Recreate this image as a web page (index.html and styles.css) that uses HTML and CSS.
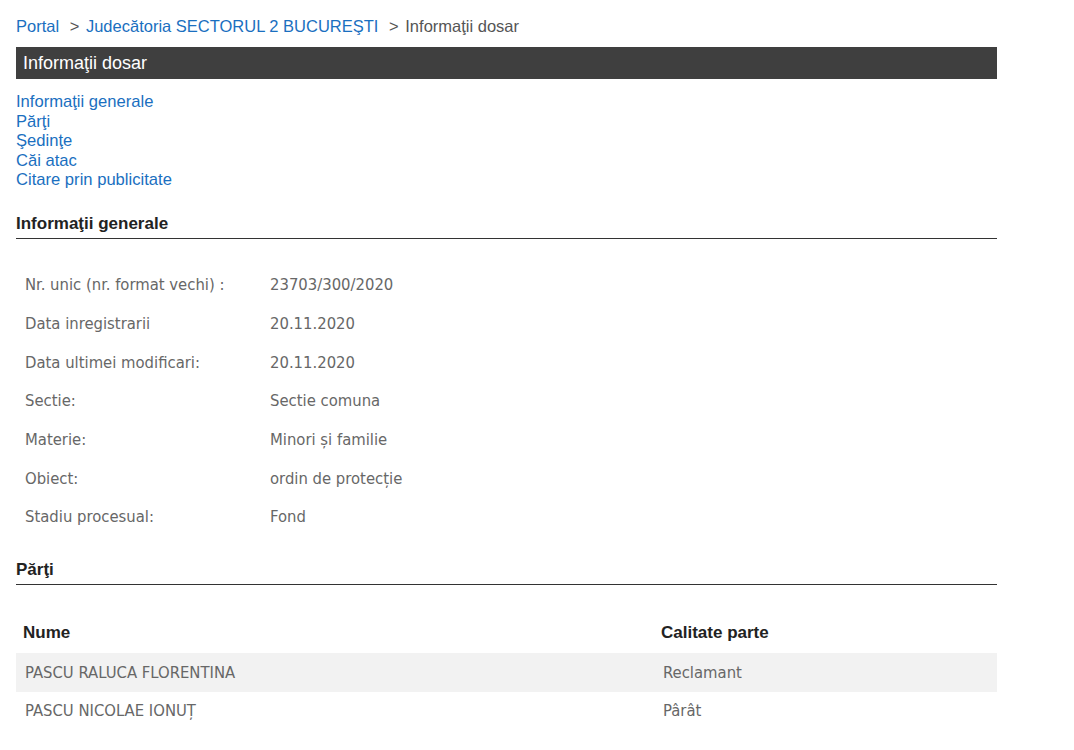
FILE: index.html
```html
<!DOCTYPE html>
<html lang="ro">
<head>
    <meta charset="UTF-8">
    <title>Informaţii dosar</title>
    <link rel="stylesheet" href="styles.css">
</head>
<body>
    <div class="page">
        <div class="breadcrumb">
            <a href="#">Portal</a>
            <span class="sep">&gt;</span>
            <a href="#">Judecătoria SECTORUL 2 BUCUREŞTI</a>
            <span class="sep">&gt;</span>
            <span class="current">Informaţii dosar</span>
        </div>

        <div class="title-bar">Informaţii dosar</div>

        <!-- cuprins -->
        <ul class="toc">
            <li><a href="#generale">Informaţii generale</a></li>
            <li><a href="#parti">Părţi</a></li>
            <li><a href="#sedinte">Şedinţe</a></li>
            <li><a href="#cai">Căi atac</a></li>
            <li><a href="#citare">Citare prin publicitate</a></li>
        </ul>

        <h2 class="section-title" id="generale">Informaţii generale</h2>
        <table class="info">
            <tr><td class="label">Nr. unic (nr. format vechi) :</td><td>23703/300/2020</td></tr>
            <tr><td class="label">Data inregistrarii</td><td>20.11.2020</td></tr>
            <tr><td class="label">Data ultimei modificari:</td><td>20.11.2020</td></tr>
            <tr><td class="label">Sectie:</td><td>Sectie comuna</td></tr>
            <tr><td class="label">Materie:</td><td>Minori și familie</td></tr>
            <tr><td class="label">Obiect:</td><td>ordin de protecție</td></tr>
            <tr><td class="label">Stadiu procesual:</td><td>Fond</td></tr>
        </table>

        <h2 class="section-title" id="parti">Părţi</h2>
        <table class="parties">
            <thead>
                <tr><th class="col-name">Nume</th><th>Calitate parte</th></tr>
            </thead>
            <tbody>
                <tr class="odd"><td>PASCU RALUCA FLORENTINA</td><td>Reclamant</td></tr>
                <tr><td>PASCU NICOLAE IONUȚ</td><td>Pârât</td></tr>
            </tbody>
        </table>
    </div>
</body>
</html>
```

FILE: styles.css
```css
/* portal dosare */
body {
    margin: 0;
    font-family: "Liberation Sans", Arial, sans-serif;
    font-size: 16.6px;
    color: #333;
    background: #fff;
}

a {
    color: #1a6fc0;
    text-decoration: none;
}

.page {
    width: 981px;
    padding: 16px 0 0 16px;
}

.breadcrumb {
    font-size: 16.5px;
    line-height: 20px;
    color: #555;
}

.breadcrumb .sep {
    margin: 0 2px 0 6px;
    color: #555;
}

.title-bar {
    margin-top: 11px;
    height: 32px;
    line-height: 32px;
    padding-left: 7px;
    background-color: #3f3f3f;
    color: #fff;
    font-size: 18px;
}

.toc {
    list-style: none;
    margin: 13px 0 0 0;
    padding: 0;
    line-height: 19.5px;
    font-size: 16.6px;
}

.section-title {
    margin: 24px 0 0 0;
    padding-bottom: 4px;
    font-size: 17px;
    font-weight: bold;
    color: #222;
    border-bottom: 1px solid #333;
}

/* informatii generale */
.info {
    border-collapse: collapse;
    margin: 27px 0 1px 0;
    font-family: "DejaVu Sans Condensed", "DejaVu Sans", sans-serif;
    font-size: 16.5px;
    color: #676767;
}

.info td {
    height: 38.67px;
    padding: 0 0 0 9px;
}

.info td.label {
    width: 236px;
}

/* parti */
.parties {
    width: 100%;
    border-collapse: collapse;
    margin-top: 28px;
}

.parties th {
    text-align: left;
    font-size: 17px;
    color: #222;
    height: 40px;
    padding: 0 0 0 7px;
}

.parties th.col-name {
    width: 631px;
}

.parties td {
    height: 38.5px;
    padding: 0 0 0 9px;
    font-family: "DejaVu Sans Condensed", "DejaVu Sans", sans-serif;
    font-size: 16.5px;
    color: #676767;
}

.parties tr.odd td {
    background-color: #f2f2f2;
}
```
